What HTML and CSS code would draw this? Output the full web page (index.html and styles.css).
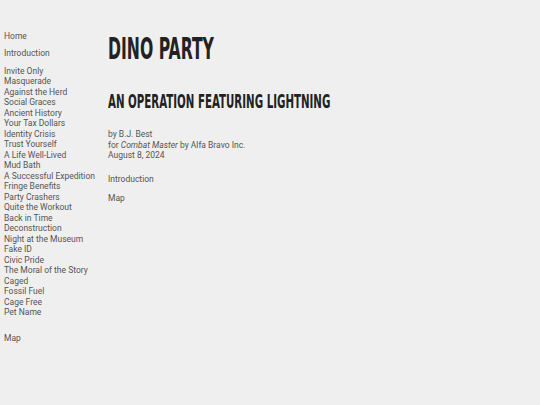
FILE: index.html
```html
<!DOCTYPE html>
<html>
<head>
<meta charset="utf-8">
<link rel="stylesheet" href="styles.css">
</head>
<body>
<div class="page">
  <nav class="side">
    <a class="item first">Home</a>
    <a class="item sec">Introduction</a>
    <ul class="chapters">
      <li>Invite Only</li>
      <li>Masquerade</li>
      <li>Against the Herd</li>
      <li>Social Graces</li>
      <li>Ancient History</li>
      <li>Your Tax Dollars</li>
      <li>Identity Crisis</li>
      <li>Trust Yourself</li>
      <li>A Life Well-Lived</li>
      <li>Mud Bath</li>
      <li>A Successful Expedition</li>
      <li>Fringe Benefits</li>
      <li>Party Crashers</li>
      <li>Quite the Workout</li>
      <li>Back in Time</li>
      <li>Deconstruction</li>
      <li>Night at the Museum</li>
      <li>Fake ID</li>
      <li>Civic Pride</li>
      <li>The Moral of the Story</li>
      <li>Caged</li>
      <li>Fossil Fuel</li>
      <li>Cage Free</li>
      <li>Pet Name</li>
    </ul>
    <a class="item map">Map</a>
  </nav>
  <main class="main">
    <h1 class="title"><span class="cond">Dino Party</span></h1>
    <h2 class="subtitle"><span class="cond">An Operation Featuring Lightning</span></h2>
    <div class="byline">
      <div>by B.J. Best</div>
      <div>for <em>Combat Master</em> by Alfa Bravo Inc.</div>
      <div>August 8, 2024</div>
    </div>
    <a class="link intro">Introduction</a>
    <a class="link">Map</a>
  </main>
</div>
</body>
</html>
```
FILE: styles.css
```css
html, body {
  margin: 0;
  padding: 0;
  background: #efefef;
}
body {
  font-family: Roboto, "Liberation Sans", sans-serif;
  font-size: 8.5px;
  line-height: 10.5px;
  color: #555;
}
.page {
  display: flex;
  padding: 31px 0 0 4px;
}
.side {
  width: 104px;
  display: flex;
  flex-direction: column;
}
.item {
  display: block;
}
.sec {
  margin-top: 6.5px;
}
.chapters {
  list-style: none;
  margin: 7px 0 0 0;
  padding: 0;
}
.map {
  margin-top: 15px;
}
.main {
  display: flex;
  flex-direction: column;
}
.title, .subtitle {
  font-family: "DejaVu Sans Condensed", "DejaVu Sans", sans-serif;
  font-weight: bold;
  text-transform: uppercase;
  color: #222;
  margin: 0;
  white-space: nowrap;
}
.cond {
  display: inline-block;
  transform-origin: left center;
}
.title {
  font-size: 30px;
  line-height: 36px;
  margin-top: 0;
}
.title .cond {
  transform: scaleX(0.58);
}
.subtitle {
  font-size: 20px;
  line-height: 24px;
  margin-top: 22px;
}
.subtitle .cond {
  transform: scaleX(0.57);
}
.byline {
  margin-top: 16px;
}
.link {
  display: block;
}
.intro {
  margin-top: 13px;
  margin-bottom: 9px;
}
```
